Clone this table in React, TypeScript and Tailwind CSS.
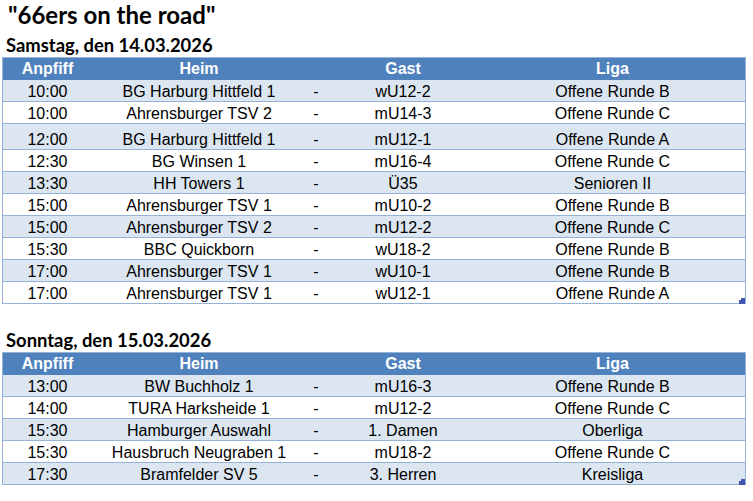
import React from "react";

type Game = { time: string; home: string; guest: string; league: string; tall?: boolean };

const saturday: Game[] = [
  { time: "10:00", home: "BG Harburg Hittfeld 1", guest: "wU12-2", league: "Offene Runde B" },
  { time: "10:00", home: "Ahrensburger TSV 2", guest: "mU14-3", league: "Offene Runde C" },
  { time: "12:00", home: "BG Harburg Hittfeld 1", guest: "mU12-1", league: "Offene Runde A", tall: true },
  { time: "12:30", home: "BG Winsen 1", guest: "mU16-4", league: "Offene Runde C" },
  { time: "13:30", home: "HH Towers 1", guest: "Ü35", league: "Senioren II" },
  { time: "15:00", home: "Ahrensburger TSV 1", guest: "mU10-2", league: "Offene Runde B" },
  { time: "15:00", home: "Ahrensburger TSV 2", guest: "mU12-2", league: "Offene Runde C" },
  { time: "15:30", home: "BBC Quickborn", guest: "wU18-2", league: "Offene Runde B" },
  { time: "17:00", home: "Ahrensburger TSV 1", guest: "wU10-1", league: "Offene Runde B" },
  { time: "17:00", home: "Ahrensburger TSV 1", guest: "wU12-1", league: "Offene Runde A" },
];

const sunday: Game[] = [
  { time: "13:00", home: "BW Buchholz 1", guest: "mU16-3", league: "Offene Runde B" },
  { time: "14:00", home: "TURA Harksheide 1", guest: "mU12-2", league: "Offene Runde C" },
  { time: "15:30", home: "Hamburger Auswahl", guest: "1. Damen", league: "Oberliga" },
  { time: "15:30", home: "Hausbruch Neugraben 1", guest: "mU18-2", league: "Offene Runde C" },
  { time: "17:30", home: "Bramfelder SV 5", guest: "3. Herren", league: "Kreisliga" },
];

const cols = "grid grid-cols-[89px_214px_20px_154px_265px]";

const ScheduleTable: React.FC<{ games: Game[] }> = ({ games }) => (
  <div className="relative w-[744px] border-x border-t border-[#95B3D7] text-[16px] leading-[18px] font-['Liberation_Sans',Arial,sans-serif]">
    <div className={`${cols} h-[22px] bg-[#4F81BD] text-white font-bold items-end pb-[2px] text-center`}>
      <span>Anpfiff</span>
      <span>Heim</span>
      <span></span>
      <span>Gast</span>
      <span>Liga</span>
    </div>
    {games.map((g, i) => (
      <div
        key={i}
        className={`${cols} ${g.tall ? "h-[26px]" : "h-[22px]"} ${
          i % 2 === 0 ? "bg-[#DCE6F1]" : "bg-white"
        } border-b border-[#95B3D7] items-end text-center text-black`}
      >
        <span>{g.time}</span>
        <span>{g.home}</span>
        <span>-</span>
        <span>{g.guest}</span>
        <span>{g.league}</span>
      </div>
    ))}
    <svg className="absolute right-0 bottom-0" width="6" height="6" viewBox="0 0 6 6">
      <polygon points="2,0 6,0 6,6 0,6 0,2 2,2" fill="#4055B0" />
    </svg>
  </div>
);

const App: React.FC = () => {
  return (
    <div className="w-[753px] h-[501px] bg-white px-[2px] font-['Lato',sans-serif] text-black">
      <h1 className="h-[34px] leading-[29px] text-[24px] font-bold pl-[6px]">"66ers on the road"</h1>
      <h2 className="h-[23px] leading-[23px] text-[18.4px] font-bold pl-[4px]">Samstag, den 14.03.2026</h2>
      <ScheduleTable games={saturday} />
      <h2 className="mt-[25px] h-[23px] leading-[23px] text-[18.4px] font-bold pl-[4px]">Sonntag, den 15.03.2026</h2>
      <ScheduleTable games={sunday} />
    </div>
  );
};

export default App;
